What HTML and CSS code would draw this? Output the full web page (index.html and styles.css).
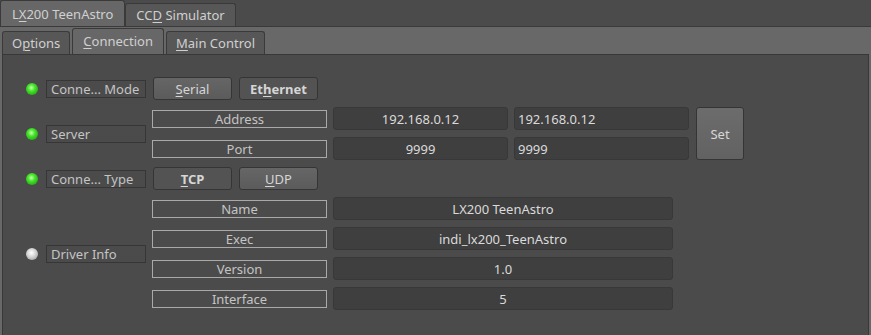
FILE: index.html
```html
<!DOCTYPE html>
<html lang="en">
<head>
    <meta charset="UTF-8">
    <title>INDI Control Panel</title>
    <link rel="stylesheet" href="styles.css">
</head>
<body>
    <div class="tabbar">
        <div class="tab active">L<u>X</u>200 TeenAstro</div>
        <div class="tab">CC<u>D</u> Simulator</div>
    </div>
    <div class="pane">
        <div class="subtabs">
            <div class="tab sub first">O<u>p</u>tions</div>
            <div class="tab sub active"><u>C</u>onnection</div>
            <div class="tab sub"><u>M</u>ain Control</div>
        </div>
        <div class="subpane">
            <div class="prop">
                <span class="led on"></span>
                <span class="name">Conne... Mode</span>
                <div class="switches">
                    <button class="btn"><u>S</u>erial</button>
                    <button class="btn checked">Et<u>h</u>ernet</button>
                </div>
            </div>

            <div class="prop">
                <span class="led on"></span>
                <span class="name">Server</span>
                <div class="grid server">
                    <span class="elem">Address</span>
                    <span class="value">192.168.0.12</span>
                    <span class="value edit">192.168.0.12</span>
                    <button class="set">Set</button>
                    <span class="elem">Port</span>
                    <span class="value">9999</span>
                    <span class="value edit">9999</span>
                </div>
            </div>

            <div class="prop">
                <span class="led on"></span>
                <span class="name">Conne... Type</span>
                <div class="switches">
                    <button class="btn checked"><u>T</u>CP</button>
                    <button class="btn"><u>U</u>DP</button>
                </div>
            </div>

            <div class="prop">
                <span class="led idle"></span>
                <span class="name">Driver Info</span>
                <div class="grid info">
                    <span class="elem">Name</span>
                    <span class="value">LX200 TeenAstro</span>
                    <span class="elem">Exec</span>
                    <span class="value">indi_lx200_TeenAstro</span>
                    <span class="elem">Version</span>
                    <span class="value">1.0</span>
                    <span class="elem">Interface</span>
                    <span class="value">5</span>
                </div>
            </div>
        </div>
    </div>
</body>
</html>
```

FILE: styles.css
```css
body {
    margin: 0;
    width: 871px;
    height: 335px;
    overflow: hidden;
    background-color: #4b4b4b;
    font-family: "Noto Sans", "DejaVu Sans", sans-serif;
    font-size: 13px;
    color: #d2d2d2;
}
u {
    text-decoration-thickness: 1px;
    text-underline-offset: 2px;
}
.tabbar {
    display: flex;
    align-items: flex-end;
    height: 26px;
}
.tab {
    height: 22px;
    line-height: 22px;
    padding: 0 10px;
    background-color: #575757;
    border: 1px solid #3a3a3a;
    border-bottom: none;
    border-radius: 3px 3px 0 0;
    color: #d0d0d0;
    white-space: nowrap;
}
.tab.active {
    height: 25px;
    line-height: 26px;
    padding: 0 11px;
    background-color: #676767;
}
.pane {
    height: 308px;
    background-color: #686868;
    border-top: 1px solid #3a3a3a;
}
.subtabs {
    display: flex;
    align-items: flex-end;
    gap: 2px;
    height: 27px;
    padding-left: 2px;
}
.tab.sub {
    padding: 0 9px;
}
.tab.sub.active {
    height: 25px;
    line-height: 24px;
    padding: 0 10px;
}
.subpane {
    height: 281px;
    margin: 0 2px;
    padding: 22px 0 0 23px;
    background-color: #4b4b4b;
    border: 1px solid #383838;
    border-bottom: none;
    box-sizing: border-box;
    display: flex;
    flex-direction: column;
    gap: 7px;
}
.prop {
    display: flex;
    align-items: center;
}
.led {
    width: 12px;
    height: 12px;
    border-radius: 50%;
    margin-right: 8px;
}
.led.on {
    background: radial-gradient(circle at 45% 40%, #c8ffb0 0, #46e62a 35%, #24a814 80%, #1c7a12 100%);
}
.led.idle {
    background: radial-gradient(circle at 45% 40%, #ffffff 0, #dcdcdc 35%, #a8a8a8 80%, #808080 100%);
}
.name {
    width: 100px;
    height: 18px;
    line-height: 17px;
    box-sizing: border-box;
    padding-left: 4px;
    margin-right: 6px;
    border: 1px solid #363636;
    color: #c4c4c4;
    white-space: nowrap;
    overflow: hidden;
}
.switches {
    display: flex;
    gap: 7px;
    margin-left: 1px;
}
.btn, .set {
    font-family: inherit;
    font-size: 13px;
    color: #d6d6d6;
    border: 1px solid #353535;
    border-radius: 3px;
    padding: 0;
}
.btn {
    width: 79px;
    height: 23px;
    background: linear-gradient(#666666, #5b5b5b);
}
.btn.checked {
    background: #535353;
    font-weight: bold;
}
.grid {
    display: grid;
    column-gap: 6px;
    row-gap: 7px;
    grid-auto-rows: 23px;
    align-items: center;
}
.grid.server {
    grid-template-columns: 175px 175px 175px 49px;
}
.grid.info {
    grid-template-columns: 175px 340px;
}
.elem {
    height: 18px;
    line-height: 16px;
    box-sizing: border-box;
    border: 1px solid #a9a9a9;
    text-align: center;
    color: #c4c4c4;
}
.value {
    height: 23px;
    line-height: 22px;
    box-sizing: border-box;
    background-color: #3f3f3f;
    border: 1px solid #383838;
    border-radius: 3px;
    text-align: center;
    color: #dadada;
}
.value.edit {
    text-align: left;
    padding-left: 3px;
}
.set {
    grid-row: span 2;
    height: 53px;
    margin-left: 1px;
    background: linear-gradient(#6c6c6c, #626262);
}
```
